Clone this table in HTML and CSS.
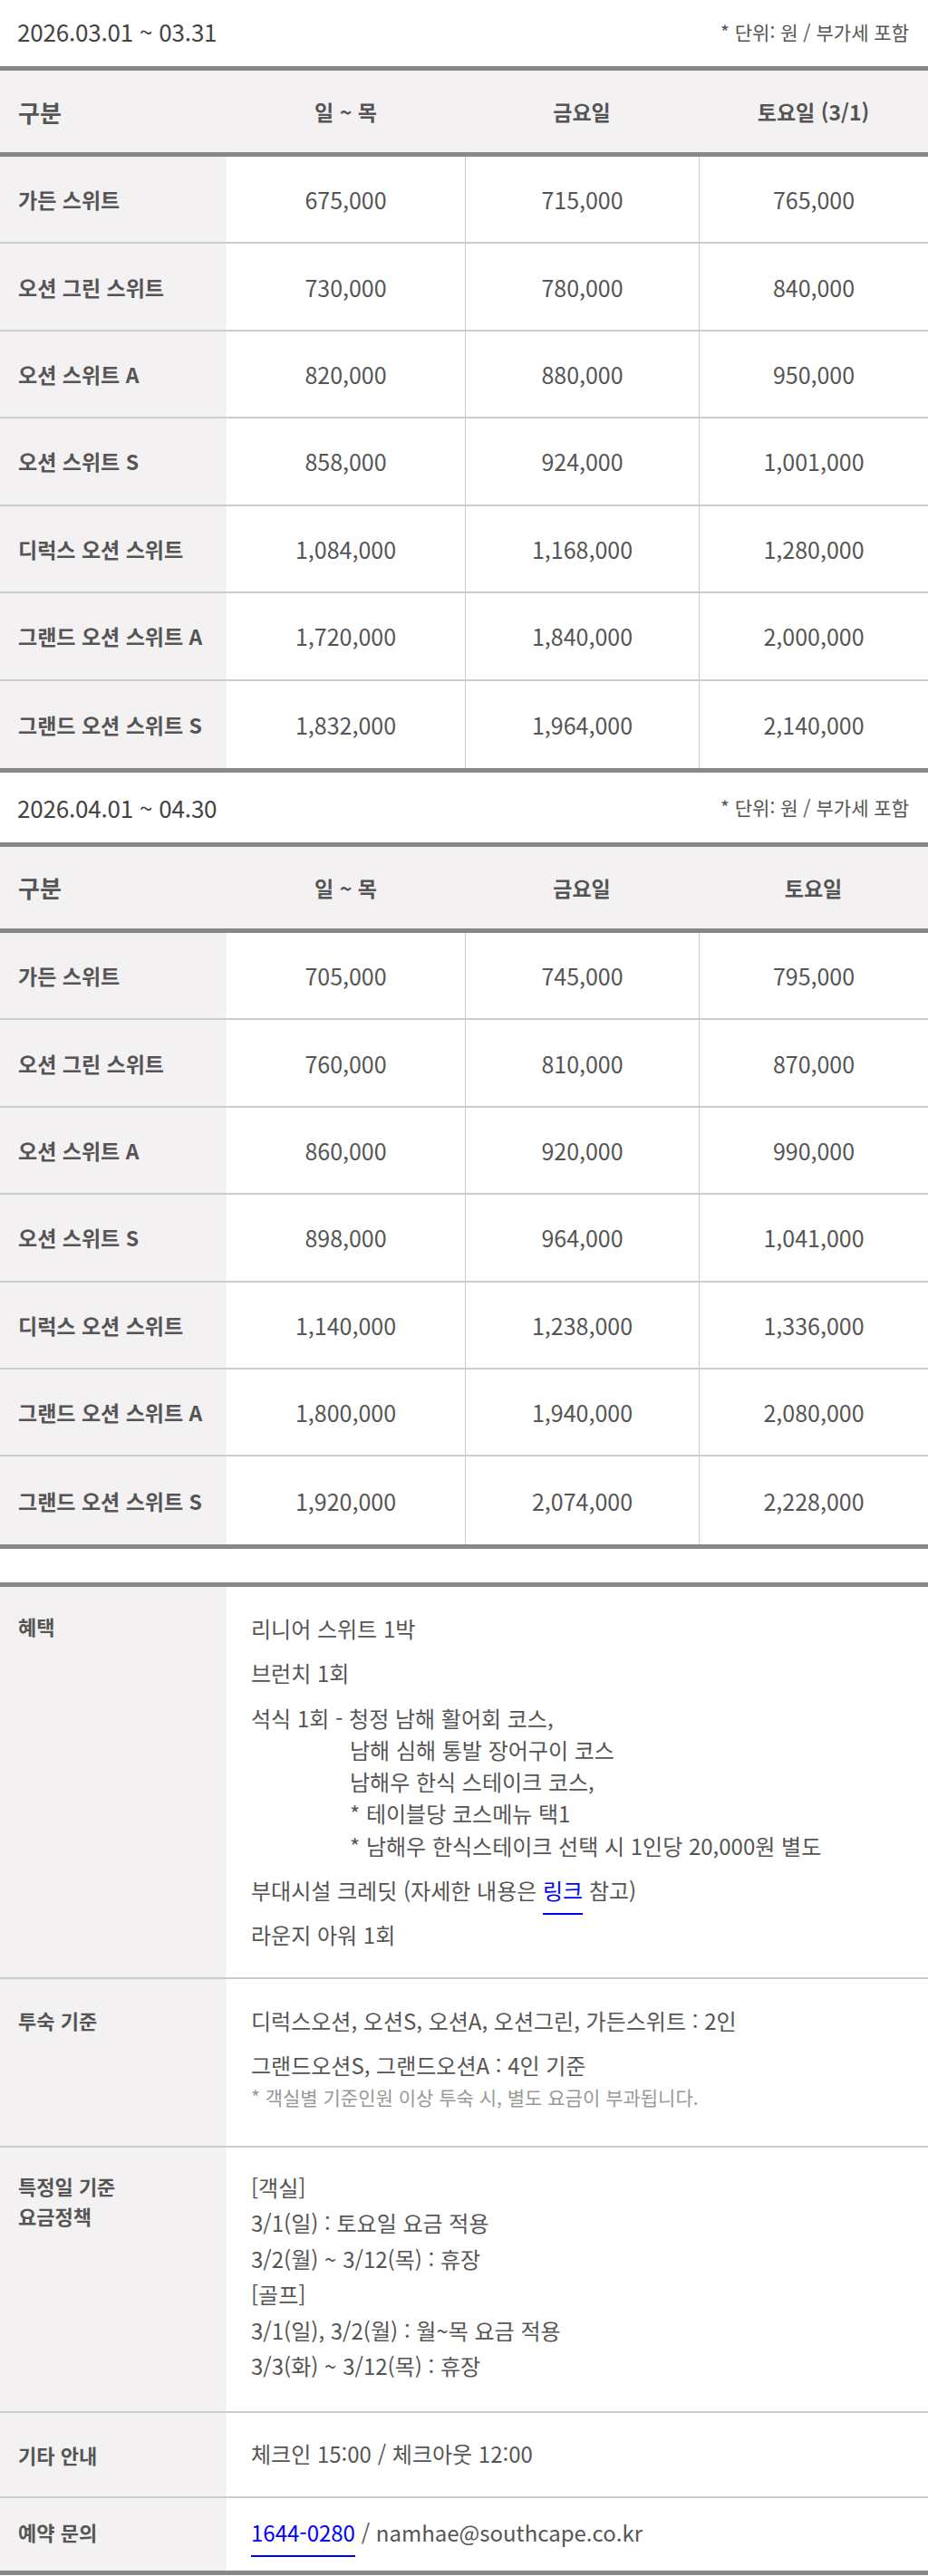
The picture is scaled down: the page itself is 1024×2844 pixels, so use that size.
FILE: index.html
```html
<!DOCTYPE html>
<html lang="ko">
<head>
<meta charset="utf-8">
<title>요금 안내</title>
<link rel="stylesheet" href="styles.css">
</head>
<body>
<div class="page">

  <section class="period period-first">
    <div class="period-head">
      <h2 class="period-title">2026.03.01 ~ 03.31</h2>
      <span class="unit">* 단위: 원 / 부가세 포함</span>
    </div>
    <div class="rate">
      <div class="rate-row rate-head">
        <div class="cell cell-label head-label">구분</div>
        <div class="cell">일 ~ 목</div>
        <div class="cell">금요일</div>
        <div class="cell">토요일 (3/1)</div>
      </div>
      <div class="rate-row">
        <div class="cell cell-label">가든 스위트</div>
        <div class="cell cell-price">675,000</div>
        <div class="cell cell-price line">715,000</div>
        <div class="cell cell-price line">765,000</div>
      </div>
      <div class="rate-row">
        <div class="cell cell-label">오션 그린 스위트</div>
        <div class="cell cell-price">730,000</div>
        <div class="cell cell-price line">780,000</div>
        <div class="cell cell-price line">840,000</div>
      </div>
      <div class="rate-row">
        <div class="cell cell-label">오션 스위트 A</div>
        <div class="cell cell-price">820,000</div>
        <div class="cell cell-price line">880,000</div>
        <div class="cell cell-price line">950,000</div>
      </div>
      <div class="rate-row">
        <div class="cell cell-label">오션 스위트 S</div>
        <div class="cell cell-price">858,000</div>
        <div class="cell cell-price line">924,000</div>
        <div class="cell cell-price line">1,001,000</div>
      </div>
      <div class="rate-row">
        <div class="cell cell-label">디럭스 오션 스위트</div>
        <div class="cell cell-price">1,084,000</div>
        <div class="cell cell-price line">1,168,000</div>
        <div class="cell cell-price line">1,280,000</div>
      </div>
      <div class="rate-row">
        <div class="cell cell-label">그랜드 오션 스위트 A</div>
        <div class="cell cell-price">1,720,000</div>
        <div class="cell cell-price line">1,840,000</div>
        <div class="cell cell-price line">2,000,000</div>
      </div>
      <div class="rate-row">
        <div class="cell cell-label">그랜드 오션 스위트 S</div>
        <div class="cell cell-price">1,832,000</div>
        <div class="cell cell-price line">1,964,000</div>
        <div class="cell cell-price line">2,140,000</div>
      </div>
    </div>
  </section>

  <section class="period">
    <div class="period-head">
      <h2 class="period-title">2026.04.01 ~ 04.30</h2>
      <span class="unit">* 단위: 원 / 부가세 포함</span>
    </div>
    <div class="rate">
      <div class="rate-row rate-head">
        <div class="cell cell-label head-label">구분</div>
        <div class="cell">일 ~ 목</div>
        <div class="cell">금요일</div>
        <div class="cell">토요일</div>
      </div>
      <div class="rate-row">
        <div class="cell cell-label">가든 스위트</div>
        <div class="cell cell-price">705,000</div>
        <div class="cell cell-price line">745,000</div>
        <div class="cell cell-price line">795,000</div>
      </div>
      <div class="rate-row">
        <div class="cell cell-label">오션 그린 스위트</div>
        <div class="cell cell-price">760,000</div>
        <div class="cell cell-price line">810,000</div>
        <div class="cell cell-price line">870,000</div>
      </div>
      <div class="rate-row">
        <div class="cell cell-label">오션 스위트 A</div>
        <div class="cell cell-price">860,000</div>
        <div class="cell cell-price line">920,000</div>
        <div class="cell cell-price line">990,000</div>
      </div>
      <div class="rate-row">
        <div class="cell cell-label">오션 스위트 S</div>
        <div class="cell cell-price">898,000</div>
        <div class="cell cell-price line">964,000</div>
        <div class="cell cell-price line">1,041,000</div>
      </div>
      <div class="rate-row">
        <div class="cell cell-label">디럭스 오션 스위트</div>
        <div class="cell cell-price">1,140,000</div>
        <div class="cell cell-price line">1,238,000</div>
        <div class="cell cell-price line">1,336,000</div>
      </div>
      <div class="rate-row">
        <div class="cell cell-label">그랜드 오션 스위트 A</div>
        <div class="cell cell-price">1,800,000</div>
        <div class="cell cell-price line">1,940,000</div>
        <div class="cell cell-price line">2,080,000</div>
      </div>
      <div class="rate-row">
        <div class="cell cell-label">그랜드 오션 스위트 S</div>
        <div class="cell cell-price">1,920,000</div>
        <div class="cell cell-price line">2,074,000</div>
        <div class="cell cell-price line">2,228,000</div>
      </div>
    </div>
  </section>

  <div class="info">
    <div class="info-row row-benefit">
      <div class="info-label">혜택</div>
      <div class="info-body">
        <p>리니어 스위트 1박</p>
        <p>브런치 1회</p>
        <p>석식 1회 - 청정 남해 활어회 코스,<br>
          <span class="indent">남해 심해 통발 장어구이 코스</span><br>
          <span class="indent">남해우 한식 스테이크 코스,</span><br>
          <span class="indent">* 테이블당 코스메뉴 택1</span><br>
          <span class="indent">* 남해우 한식스테이크 선택 시 1인당 20,000원 별도</span></p>
        <p>부대시설 크레딧 (자세한 내용은 <a class="link" href="#">링크</a> 참고)</p>
        <p>라운지 아워 1회</p>
      </div>
    </div>
    <div class="info-row row-stay">
      <div class="info-label">투숙 기준</div>
      <div class="info-body">
        <p>디럭스오션, 오션S, 오션A, 오션그린, 가든스위트 : 2인</p>
        <p class="tight">그랜드오션S, 그랜드오션A : 4인 기준</p>
        <p class="note">* 객실별 기준인원 이상 투숙 시, 별도 요금이 부과됩니다.</p>
      </div>
    </div>
    <div class="info-row row-special">
      <div class="info-label">특정일 기준<br>요금정책</div>
      <div class="info-body">
        <p class="list">[객실]<br>
          3/1(일) : 토요일 요금 적용<br>
          3/2(월) ~ 3/12(목) : 휴장<br>
          [골프]<br>
          3/1(일), 3/2(월) : 월~목 요금 적용<br>
          3/3(화) ~ 3/12(목) : 휴장</p>
      </div>
    </div>
    <div class="info-row row-etc">
      <div class="info-label">기타 안내</div>
      <div class="info-body">
        <p>체크인 15:00 / 체크아웃 12:00</p>
      </div>
    </div>
    <div class="info-row row-contact">
      <div class="info-label">예약 문의</div>
      <div class="info-body">
        <p><a class="link" href="#">1644-0280</a> / namhae@southcape.co.kr</p>
      </div>
    </div>
  </div>

</div>
</body>
</html>
```

FILE: styles.css
```css
* {
  box-sizing: border-box;
}

html, body {
  margin: 0;
  padding: 0;
  background: #ffffff;
}

body {
  font-family: "Noto Sans CJK KR", "Noto Sans", sans-serif;
  color: #555555;
}

.page {
  width: 1024px;
  margin-top: -4px;
}

.period-head {
  height: 77px;
  display: flex;
  align-items: center;
  justify-content: space-between;
  padding: 0 21px 0 19px;
}

.period-title {
  margin: 0;
  font-size: 26px;
  font-weight: 400;
  color: #444444;
  letter-spacing: -0.2px;
}

.unit {
  font-size: 21px;
  color: #555555;
}

.rate {
  border-top: 5px solid #888888;
  border-bottom: 5px solid #888888;
}

.rate-row {
  display: grid;
  grid-template-columns: 250px 263px 258px 253px;
  height: 96.43px;
  border-bottom: 2px solid #cccccc;
}

.rate-row:last-child {
  border-bottom: 0;
}

.rate-head {
  height: 95px;
  background: #f3f1f2;
  border-bottom: 5px solid #888888;
  font-weight: 700;
  font-size: 23px;
}

.cell {
  display: flex;
  align-items: center;
  justify-content: center;
}

.cell-label {
  justify-content: flex-start;
  padding-left: 20px;
  background: #f3f1f2;
  font-size: 23px;
  font-weight: 700;
  color: #555555;
}

.head-label {
  font-size: 26px;
}

.cell-price {
  font-size: 25px;
  color: #555555;
}

.line {
  border-left: 1px solid #cccccc;
}

/* info table */

.info {
  margin-top: 37px;
  border-top: 5px solid #888888;
  border-bottom: 5px solid #888888;
}

.info-row {
  display: grid;
  grid-template-columns: 250px 1fr;
  border-bottom: 2px solid #cccccc;
}

.info-row:last-child {
  border-bottom: 0;
}

.info-label {
  background: #f3f1f2;
  padding: 27.5px 20px 20px;
  font-size: 22px;
  font-weight: 700;
  line-height: 33px;
  color: #555555;
}

.info-body {
  padding: 28px 26px 29px 27px;
  font-size: 24px;
  line-height: 35.3px;
  color: #555555;
}

.info-body p {
  margin: 0 0 14px;
}

.info-body p:last-child {
  margin-bottom: 0;
}

.row-stay .info-label {
  padding-top: 29.5px;
}

.row-stay .info-body {
  padding-top: 28.5px;
  padding-bottom: 38.5px;
}

.info-body p.tight {
  margin-bottom: 0;
}

.info-body p.note {
  font-size: 21px;
  color: #999999;
  line-height: 30px;
  margin-top: 2.4px;
}

.row-special .info-label {
  padding-top: 26.5px;
}

.row-special .info-body {
  padding-top: 24px;
  padding-bottom: 30px;
}

.info-body p.list {
  line-height: 39.5px;
}

.row-etc .info-label {
  padding-top: 30.5px;
}

.row-etc .info-body {
  padding-top: 27.5px;
  padding-bottom: 30px;
}

.row-contact .info-label {
  padding-top: 20.5px;
}

.row-contact .info-body {
  padding-top: 19.5px;
  padding-bottom: 25px;
}

.indent {
  padding-left: 109px;
}

.link {
  color: #0000ff;
  text-decoration: none;
  padding-bottom: 8px;
  border-bottom: 2px solid #0000ff;
}
```
